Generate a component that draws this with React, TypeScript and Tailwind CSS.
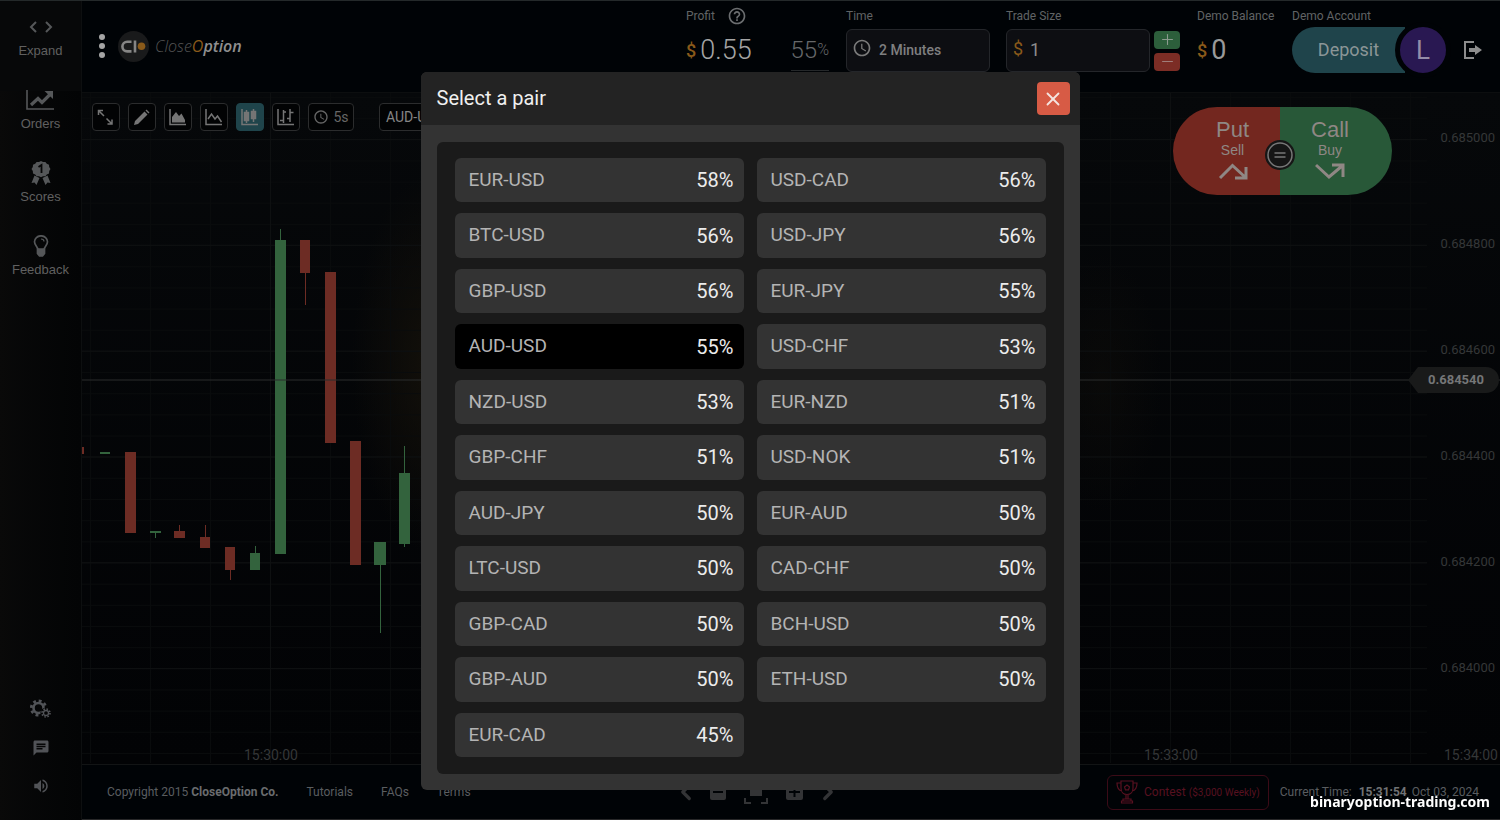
import type { ReactNode } from 'react';
import { MdAccessTime, MdChat, MdHelpOutline, MdVolumeUp } from 'react-icons/md';
import { ChevronLeft, ChevronRight, Minus, Plus, X } from 'lucide-react';

const pairs = [
  ['EUR-USD', 58], ['USD-CAD', 56],
  ['BTC-USD', 56], ['USD-JPY', 56],
  ['GBP-USD', 56], ['EUR-JPY', 55],
  ['AUD-USD', 55], ['USD-CHF', 53],
  ['NZD-USD', 53], ['EUR-NZD', 51],
  ['GBP-CHF', 51], ['USD-NOK', 51],
  ['AUD-JPY', 50], ['EUR-AUD', 50],
  ['LTC-USD', 50], ['CAD-CHF', 50],
  ['GBP-CAD', 50], ['BCH-USD', 50],
  ['GBP-AUD', 50], ['ETH-USD', 50],
  ['EUR-CAD', 45],
] as const;

const selectedPair = 'AUD-USD';

// x, width, body top, body bottom, wick top, wick bottom, rising
const candles: [number, number, number, number, number, number, boolean][] = [
  [0, 2, 354, 361, 354, 361, false],
  [18, 10, 359, 361, 359, 361, true],
  [43, 11, 359, 440, 359, 440, false],
  [68, 11, 438, 440, 438, 445, true],
  [92, 11, 438, 445, 432, 445, false],
  [118, 10, 444, 455, 432, 455, false],
  [143, 10, 454, 477, 454, 487, false],
  [168, 10, 460, 477, 453, 477, true],
  [193, 11, 147, 461, 136, 461, true],
  [218, 10, 147, 180, 147, 212, false],
  [243, 11, 179, 350, 179, 350, false],
  [268, 11, 348, 472, 348, 472, false],
  [292, 12, 449, 472, 449, 540, true],
  [317, 11, 380, 451, 353, 454, true],
];

const prices = ['0.685000', '0.684800', '0.684600', '0.684400', '0.684200', '0.684000'];

function ExpandIcon() {
  return (
    <svg width="24" height="12" viewBox="0 0 24 12" fill="none" stroke="currentColor" strokeWidth="2">
      <path d="M7 1L2 6l5 5M17 1l5 5-5 5" />
    </svg>
  );
}

function LineChartIcon() {
  return (
    <svg width="28" height="22" viewBox="0 0 28 22" fill="none" stroke="currentColor">
      <path d="M1 1v19h27" strokeWidth="1.600" />
      <path d="M5 16l7-6.500 4 4 8-8" strokeWidth="3.200" />
      <path d="M18.500 2H27v8z" fill="currentColor" stroke="none" />
    </svg>
  );
}

function MedalIcon() {
  return (
    <svg width="20" height="24" viewBox="0 0 20 24" fill="currentColor">
      <path d="M10 0l2 1 2.400-.1 1.400 1.900 2.200 1 .2 2.300 1.300 2-1.300 2-.2 2.300-2.200 1-1.400 1.900L12 15.200l-2 1-2-1-2.400.1-1.400-1.900-2.200-1-.2-2.300L.5 8.100l1.300-2L2 3.800l2.200-1L5.600.9 8 1z" />
      <path d="M3.500 14.500L.5 22l3-.5L5.500 24l3-7zM16.500 14.500l3 7.500-3-.5-2 2.500-3-7z" />
      <path d="M7.500 6L10.500 4v8" fill="none" stroke="#070707" strokeWidth="1.800" />
    </svg>
  );
}

function BulbIcon() {
  return (
    <svg width="16" height="22" viewBox="0 0 16 22" fill="none" stroke="currentColor" strokeWidth="1.700">
      <path d="M5 15c0-3-3.500-4.500-3.500-8.200a6.500 6 0 0113 0C14.500 10.500 11 12 11 15z" />
      <path d="M8 4c1.800 0 3 1 3 2.500" strokeWidth="1.200" />
      <path d="M4.500 14h7v4.500L9.500 21h-3l-2-2.500z" fill="currentColor" />
    </svg>
  );
}

function GearsIcon() {
  return (
    <svg width="21" height="20" viewBox="0 0 21 20" fill="none" stroke="currentColor">
      <circle cx="8.500" cy="9" r="5" strokeWidth="2.600" />
      <circle cx="8.500" cy="9" r="7.200" strokeWidth="2.800" strokeDasharray="2.830 2.825" />
      <circle cx="16" cy="14" r="5.600" fill="#040404" stroke="none" />
      <circle cx="16" cy="14" r="2.500" strokeWidth="1.300" />
      <circle cx="16" cy="14" r="4" strokeWidth="1.600" strokeDasharray="1.570 1.570" />
    </svg>
  );
}

function Logo() {
  return (
    <a href="#home" className="flex items-center gap-1.5">
      <svg width="31" height="31" viewBox="0 0 31 31" fill="none">
        <circle cx="15.500" cy="15.500" r="15.500" fill="#191a1b" />
        <path d="M13.500 10.800H9.200a4.800 4.800 0 000 9.600h4.300" stroke="#858585" strokeWidth="2.600" />
        <path d="M17 9.500v12" stroke="#858585" strokeWidth="2.600" />
        <circle cx="23.500" cy="15.200" r="3.800" fill="#8a5a1a" />
      </svg>
      <span className="font-['Open_Sans'] text-[16px] font-light italic text-[#555]">
        Close<b className="text-[#8a5a1a]">O</b><b className="font-semibold text-[#8f8f8f]">ption</b>
      </span>
    </a>
  );
}

function SideItem({ icon, label }: { icon: ReactNode; label: string }) {
  return (
    <button className="flex h-[73px] flex-col items-center gap-1 text-[13px] leading-4 text-[#606060]">
      <span className="flex h-6 items-center text-[#555759]">{icon}</span>
      {label}
    </button>
  );
}

function Sidebar() {
  return (
    <nav className="flex w-[81px] shrink-0 flex-col items-center bg-linear-to-r from-[#090909] to-[#030405] font-['Liberation_Sans',Arial,sans-serif]">
      <div className="flex h-[90px] w-full flex-col items-center bg-[#070809] pt-[14px]">
        <SideItem icon={<ExpandIcon />} label="Expand" />
      </div>
      <div className="-mt-[3px] flex flex-col items-center">
        <SideItem icon={<LineChartIcon />} label="Orders" />
        <SideItem icon={<MedalIcon />} label="Scores" />
        <SideItem icon={<BulbIcon />} label="Feedback" />
      </div>
      <div className="mt-auto flex flex-col items-center gap-5 pb-[25px] text-[#515357]">
        <button aria-label="Settings"><GearsIcon /></button>
        <button aria-label="Messages"><MdChat size={18} /></button>
        <button aria-label="Sound"><MdVolumeUp size={18} /></button>
      </div>
    </nav>
  );
}

function Header() {
  return (
    <header className="flex h-[92px] shrink-0 items-start border-b border-[#0c0e0f] bg-[#000306] text-[12px] text-[#606365]">
      <div className="flex h-full items-center gap-3 pb-px pl-4">
        <button aria-label="Menu" className="flex w-2 flex-col items-center gap-[3px]">
          <span className="size-1.5 rounded-full bg-[#a5a5a5]" />
          <span className="size-1.5 rounded-full bg-[#a5a5a5]" />
          <span className="size-1.5 rounded-full bg-[#a5a5a5]" />
        </button>
        <Logo />
      </div>
      <div className="ml-auto flex pr-[17px] pt-1">
        <div className="w-[160px]">
          <div className="mb-0.5 flex h-[22px] items-center gap-3">Profit <MdHelpOutline size={20} className="text-[#6b6e70]" /></div>
          <div className="flex h-[42px] items-center">
            <span className="text-[18px] font-medium text-[#8a5a1a]">$</span>
            <span className="ml-1 text-[27px] font-light text-[#a5a5a5]">0.55</span>
            <button className="ml-auto mr-[17px] flex h-[42px] items-center border-b border-[#25282a] text-[24px] font-light text-[#66686a]">55<span className="text-[16px]">%</span></button>
          </div>
        </div>
        <div className="mr-4 w-36">
          <label htmlFor="time" className="mb-0.5 flex h-[22px] items-center">Time</label>
          <div className="relative">
            <MdAccessTime size={20} className="absolute left-1.5 top-[9px] text-[#7b7b7b]" />
            <select id="time" className="h-[43px] w-full appearance-none rounded-md border border-[#24262a] bg-[#0d0e12] pl-8 text-[14px] font-medium text-[#7f7f80]">
              <option>2 Minutes</option>
            </select>
          </div>
        </div>
        <div className="mr-[17px]">
          <label htmlFor="size" className="mb-0.5 flex h-[22px] items-center">Trade Size</label>
          <div className="flex gap-1">
            <div className="relative w-36">
              <span className="absolute left-[7px] top-2 text-[18px] leading-6 text-[#8a5a1a]">$</span>
              <input id="size" defaultValue="1" className="h-[43px] w-full rounded-md border border-[#24262a] bg-[#0d0e12] pb-0.5 pl-[23px] text-[18px] text-[#8c8c8c]" />
            </div>
            <div className="flex flex-col justify-center gap-1">
              <button aria-label="Increase" className="flex h-[18px] w-[26px] items-center justify-center rounded bg-[#2c5e3b] text-[#8c9a8f]"><Plus size={17} strokeWidth={1.500} /></button>
              <button aria-label="Decrease" className="flex h-[18px] w-[26px] items-center justify-center rounded bg-[#7c2d25] text-[#a07e7a]"><Minus size={17} strokeWidth={1.500} /></button>
            </div>
          </div>
        </div>
        <div className="w-[95px]">
          <div className="mb-0.5 flex h-[22px] items-center whitespace-nowrap">Demo Balance</div>
          <div className="flex h-[42px] items-center">
            <span className="text-[18px] font-medium text-[#8a5a1a]">$</span>
            <span className="ml-1 text-[27px] text-[#999]">0</span>
          </div>
        </div>
        <div className="w-[154px]">
          <div className="flex h-[22px] items-center">Demo Account</div>
          <div className="flex items-center">
            <button className="h-[46px] flex-1 rounded-l-full bg-[#1f444b] pb-0.5 text-[18px] text-[#8b9697]">Deposit</button>
            <button className="-my-[5px] -ml-[10px] -mr-[5px] size-14 shrink-0 rounded-full border-[5px] border-[#000306] bg-[#291852] text-[26px] leading-none text-[#958da8]">L</button>
          </div>
        </div>
        <button aria-label="Log out" className="ml-[17px] mt-[35px] size-5 text-[#8d8d8d]">
          <svg width="20" height="20" viewBox="0 0 20 20" fill="none" stroke="currentColor" strokeWidth="2">
            <path d="M11 2H2v16h9" />
            <path d="M6 8h6V5l7 5-7 5v-3H6z" fill="currentColor" stroke="none" />
          </svg>
        </button>
      </div>
    </header>
  );
}

const toolIcons: { label: string; icon: ReactNode }[] = [
  { label: 'Full screen', icon: <path d="M1.500 6V1.500H6M1.500 1.500L7 7M9.500 9.500l5 5M15 10.500V15h-4.500" /> },
  { label: 'Draw', icon: <path d="M1 16l1-4L11.500 2.500l3 3L5 15zM12.500 1.500l1-1 3 3-1 1z" fill="currentColor" stroke="none" /> },
  { label: 'Area', icon: <><path d="M1 0v15.500h16" /><path d="M3 13.500V8l4-5 3 4 2.500-2.500L16 11v2.500z" fill="currentColor" stroke="none" /></> },
  { label: 'Line', icon: <path d="M1 0v15.500h16M3 10l3.500-5 3.500 5 2.500-3 4 6" /> },
  { label: 'Candles', icon: <><path d="M1 0v15.500h16M5.500 1v13M12.500 0v13" /><path d="M3.500 3.500h4v8h-4zM10.500 2.500h4v7h-4z" fill="currentColor" /></> },
  { label: 'Bars', icon: <path d="M1 0v15.500h16M3 11.500h3.500M6.500 1v13M6.500 3H9M10 9.500h3M13 0v13M13 3.500h3.500" /> },
];

function Toolbar() {
  const base = 'flex h-7 items-center justify-center rounded border';
  return (
    <div className="relative flex items-center gap-2 px-2.5 pt-[10px]">
      {toolIcons.map(({ label, icon }) => (
        <button
          key={label}
          aria-label={label}
          className={`${base} w-7 text-[#757575] ${label === 'Candles' ? 'border-[#1f444b] bg-[#1f444b]' : 'border-[#2b2c2d] bg-[#020304]'}`}
        >
          <svg width="18" height="17" viewBox="0 0 18 17" fill="none" stroke="currentColor" strokeWidth="1.500">{icon}</svg>
        </button>
      ))}
      <button className={`${base} w-[46px] gap-1 border-[#2b2c2d] bg-[#020304] text-[14px] text-[#666]`}><MdAccessTime size={16} />5s</button>
      <button className={`${base} ml-[17px] border-[#2b2c2d] bg-[#020304] px-1.5 text-[14px] text-[#858585]`}>AUD-USD</button>
    </div>
  );
}

function PriceChart() {
  return (
    <svg className="absolute inset-0 size-full" shapeRendering="crispEdges">
      <defs>
        <pattern id="minor" x="8" y="4" width="60" height="21.160" patternUnits="userSpaceOnUse">
          <path d="M.5 0v22M0 .5h60" stroke="#090b0c" />
        </pattern>
        <pattern id="major" x="188" y="46" width="900" height="105.800" patternUnits="userSpaceOnUse">
          <path d="M.5 0v106M0 .5h900" stroke="#0e1011" />
        </pattern>
        <radialGradient id="glow">
          <stop offset="0" stopColor="#13100a" />
          <stop offset="1" stopColor="#13100a" stopOpacity="0" />
        </radialGradient>
      </defs>
      <ellipse cx="350" cy="270" rx="80" ry="190" fill="url(#glow)" />
      <ellipse cx="1020" cy="290" rx="60" ry="130" fill="url(#glow)" opacity="0.400" />
      <rect width="1345" height="670" fill="url(#minor)" />
      <rect width="1345" height="640" fill="url(#major)" />
      {candles.map(([x, w, top, bottom, wickTop, wickBottom, up]) => (
        <g key={x} fill={up ? '#33633d' : '#6d2c24'}>
          <rect x={x} y={top} width={w} height={bottom - top} />
          <rect x={x + Math.floor(w / 2)} y={wickTop} width={1} height={wickBottom - wickTop} />
        </g>
      ))}
      <rect y="286" width="100%" height="2" fill="#2a2c2b" fillOpacity="0.500" />
    </svg>
  );
}

function TradeButtons() {
  return (
    <div className="absolute right-[108px] top-[14px] flex h-[88px] overflow-hidden rounded-full font-['Liberation_Sans',Arial,sans-serif] text-[#8f8784]">
      <button className="flex w-[107px] flex-col items-center bg-[#73271f] pl-3 pt-[11px]">
        <span className="text-[22px] leading-6">Put</span>
        <span className="text-[14px] leading-4">Sell</span>
        <svg className="mt-0.5" width="30" height="20" viewBox="0 0 30 20" fill="none" stroke="currentColor" strokeWidth="3">
          <path d="M2 18L14.500 5.500 27 17M28 7v11H17" />
        </svg>
      </button>
      <button className="flex w-[112px] flex-col items-center bg-[#285838] pr-3 pt-[11px]">
        <span className="text-[22px] leading-6">Call</span>
        <span className="text-[14px] leading-4">Buy</span>
        <svg className="mt-0.5" width="30" height="20" viewBox="0 0 30 20" fill="none" stroke="currentColor" strokeWidth="3">
          <path d="M1 5l13 12L27 6M17 5h11v12" />
        </svg>
      </button>
      <span className="absolute left-[92px] top-[33px] flex size-[30px] items-center justify-center rounded-full border-2 border-[#161616] bg-[#161616] text-[#777]">
        <svg width="26" height="26" viewBox="0 0 26 26" fill="none" stroke="currentColor">
          <circle cx="13" cy="13" r="12" strokeWidth="1.500" />
          <path d="M7.500 11h11M7.500 15h11" strokeWidth="1.500" />
        </svg>
      </span>
    </div>
  );
}

function Chart() {
  return (
    <main className="relative flex-1 overflow-hidden bg-linear-to-b from-[#06080a] to-[#020305] text-[13px] leading-4 text-[#353738]">
      <PriceChart />
      <Toolbar />
      <TradeButtons />
      <ul className="absolute right-[5px] top-[37px]">
        {prices.map((price) => (
          <li key={price} className="h-[106px]">{price}</li>
        ))}
      </ul>
      <div className="absolute right-px top-[274px]">
        <svg width="91" height="26" viewBox="0 0 91 26" className="block">
          <path d="M0 13L10 0h68a13 13 0 010 26H10z" fill="#191a1a" />
        </svg>
        <span className="absolute left-5 top-[5px] font-bold text-[#757677]">0.684540</span>
      </div>
      <div className="text-[14px]">
        <span className="absolute bottom-px left-[162px]">15:30:00</span>
        <span className="absolute bottom-px left-[1062px]">15:33:00</span>
        <span className="absolute bottom-px right-[2px]">15:34:00</span>
      </div>
    </main>
  );
}

function TrophyIcon() {
  return (
    <svg width="22" height="24" viewBox="0 0 22 24" fill="none" stroke="currentColor" strokeWidth="1.200">
      <path d="M5 1h12v7c0 4-2.500 6.500-6 6.500S5 12 5 8zM5 3H1c0 5 2 7.500 5 8M17 3h4c0 5-2 7.500-5 8M10 15v4M12 15v4M7 19h8v2H7zM5.500 21h11v2h-11z" />
      <path d="M11 5l2.500 1.900-1 3h-3l-1-3z" />
    </svg>
  );
}

function Footer() {
  return (
    <footer className="flex h-14 shrink-0 items-center border-b border-t border-[#121415] border-b-[#282829] bg-[#000306] pl-[25px] text-[12px] text-[#5a5d60]">
      <div className="flex gap-7">
        <span>Copyright 2015 <b className="text-[#6a6c6e]">CloseOption Co.</b></span>
        <a href="#tutorials">Tutorials</a>
        <a href="#faqs">FAQs</a>
        <a href="#terms">Terms</a>
      </div>
      <div className="ml-[202px] flex items-center gap-[18px] text-[#333436]">
        <button aria-label="Back"><ChevronLeft size={26} strokeWidth={3} /></button>
        <button aria-label="Zoom out" className="-ml-[7px]">
          <svg width="16" height="18" viewBox="0 0 16 18"><rect y="1" width="16" height="16" rx="2" fill="currentColor" /><path d="M3 9h10" stroke="#000306" strokeWidth="2" /></svg>
        </button>
        <button aria-label="Reset zoom" className="pt-1">
          <svg width="24" height="20" viewBox="0 0 24 20" fill="none" stroke="currentColor" strokeWidth="2"><path d="M1 6V1h6M17 1h6v5M1 14v5h6M17 19h6v-5" /><path d="M6 4h12v8H6z" fill="currentColor" stroke="none" /></svg>
        </button>
        <button aria-label="Zoom in">
          <svg width="17" height="18" viewBox="0 0 17 18"><rect y="1" width="17" height="16" rx="2" fill="currentColor" /><path d="M3 9h11M8.500 4v10" stroke="#000306" strokeWidth="2" /></svg>
        </button>
        <button aria-label="Forward" className="-ml-1.5"><ChevronRight size={26} strokeWidth={3} /></button>
      </div>
      <div className="ml-auto flex items-center gap-[11px] pr-[21px]">
        <button className="flex h-[35px] items-center gap-1.5 rounded-md border border-[#3b0b17] px-2 text-[#571120]">
          <TrophyIcon />
          <span>Contest <small className="text-[10px]">($3,000 Weekly)</small></span>
        </button>
        <span>Current Time: <b className="ml-1 text-[#707274]">15:31:54</b> <span className="ml-0.5">Oct 03, 2024</span></span>
      </div>
    </footer>
  );
}

function PairDialog() {
  return (
    <div className="fixed inset-0 flex justify-center pb-[30px] pt-[72px]">
      <section role="dialog" aria-labelledby="pair-title" className="flex w-full max-w-[659px] flex-col overflow-hidden rounded-md bg-[#333]">
        <div className="flex h-[53px] shrink-0 items-center justify-between bg-[#232323] pl-4 pr-[10px]">
          <h2 id="pair-title" className="pb-0.5 text-[20px] text-[#f0f0f0]">Select a pair</h2>
          <button aria-label="Close" className="flex size-[33px] items-center justify-center rounded bg-[#d75b45] text-[#f4e4e0]">
            <X size={22} strokeWidth={2} />
          </button>
        </div>
        <div className="flex min-h-0 flex-1 px-4 pb-4 pt-[17px]">
          <div className="grid flex-1 auto-rows-fr grid-cols-2 gap-x-[13px] gap-y-[11px] rounded-md bg-[#1a1a1a] px-[18px] pb-[17px] pt-4">
            {pairs.map(([name, percent]) => (
              <button
                key={name}
                className={`flex items-center justify-between rounded-md pl-[14px] pr-[10px] text-[20px] ${name === selectedPair ? 'bg-black' : 'bg-[#333]'}`}
              >
                <span className="text-[19px] text-[#b4b4b4]">{name}</span>
                <span className="text-[#ececec]">{percent}%</span>
              </button>
            ))}
          </div>
        </div>
      </section>
    </div>
  );
}

export default function App() {
  return (
    <div className="flex h-screen overflow-hidden border-t border-[#24292a] bg-[#000306] font-['Roboto',sans-serif]">
      <Sidebar />
      <div className="flex min-w-0 flex-1 flex-col border-l border-[#0d0f10]">
        <Header />
        <Chart />
        <Footer />
      </div>
      <PairDialog />
      <span className="fixed bottom-[9px] right-[10px] font-['Noto_Sans',sans-serif] text-[14px] font-bold leading-[18px] text-white">binaryoption-trading.com</span>
    </div>
  );
}
